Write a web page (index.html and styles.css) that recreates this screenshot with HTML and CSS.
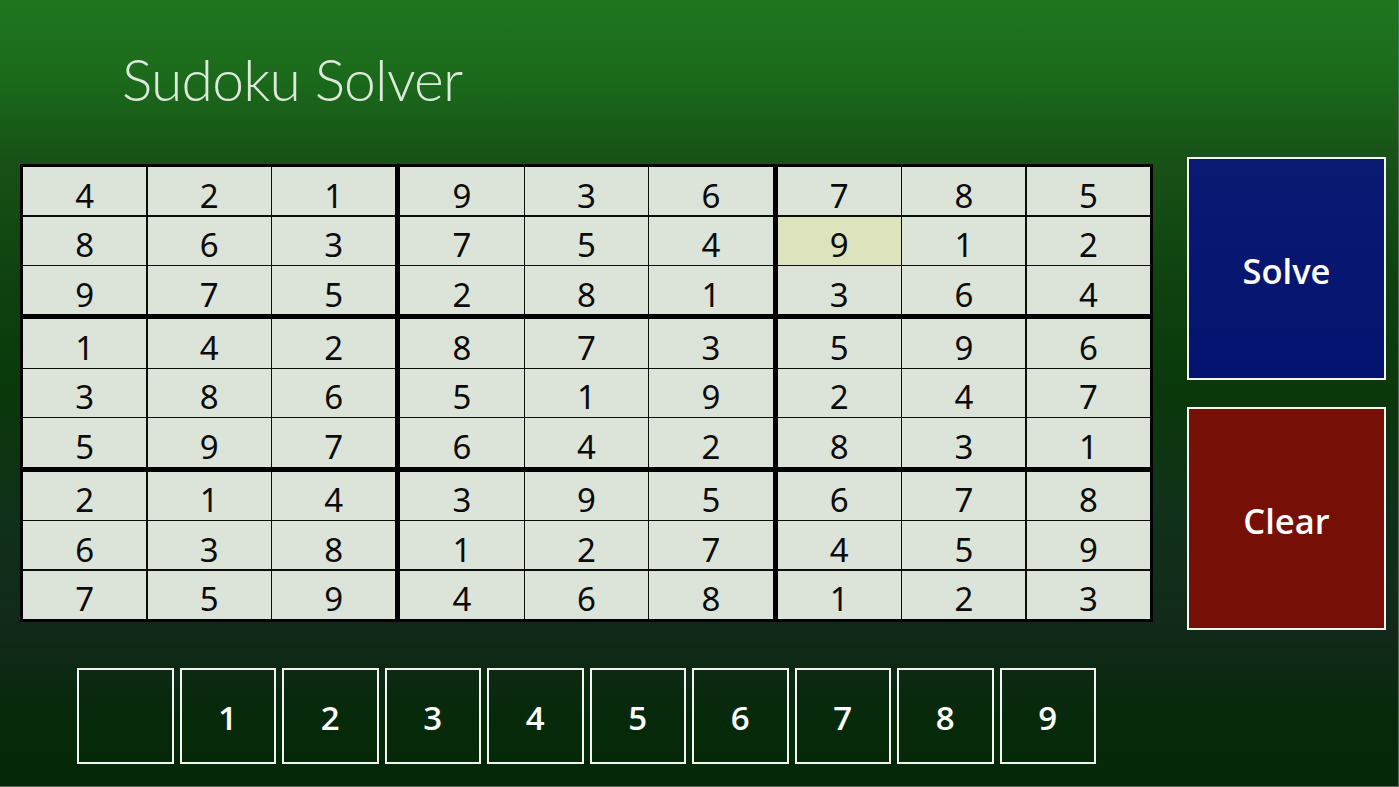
FILE: index.html
```html
<!DOCTYPE html>
<html lang="en">
<head>
<meta charset="utf-8">
<title>Sudoku Solver</title>
<link rel="stylesheet" href="styles.css">
</head>
<body>
<div class="app">
  <h1 class="title">Sudoku Solver</h1>
  <div class="main">
    <div class="board">
      <div class="block"><div class="cell">4</div><div class="cell">2</div><div class="cell">1</div><div class="cell">8</div><div class="cell">6</div><div class="cell">3</div><div class="cell">9</div><div class="cell">7</div><div class="cell">5</div></div>
      <div class="block"><div class="cell">9</div><div class="cell">3</div><div class="cell">6</div><div class="cell">7</div><div class="cell">5</div><div class="cell">4</div><div class="cell">2</div><div class="cell">8</div><div class="cell">1</div></div>
      <div class="block"><div class="cell">7</div><div class="cell">8</div><div class="cell">5</div><div class="cell selected">9</div><div class="cell">1</div><div class="cell">2</div><div class="cell">3</div><div class="cell">6</div><div class="cell">4</div></div>
      <div class="block"><div class="cell">1</div><div class="cell">4</div><div class="cell">2</div><div class="cell">3</div><div class="cell">8</div><div class="cell">6</div><div class="cell">5</div><div class="cell">9</div><div class="cell">7</div></div>
      <div class="block"><div class="cell">8</div><div class="cell">7</div><div class="cell">3</div><div class="cell">5</div><div class="cell">1</div><div class="cell">9</div><div class="cell">6</div><div class="cell">4</div><div class="cell">2</div></div>
      <div class="block"><div class="cell">5</div><div class="cell">9</div><div class="cell">6</div><div class="cell">2</div><div class="cell">4</div><div class="cell">7</div><div class="cell">8</div><div class="cell">3</div><div class="cell">1</div></div>
      <div class="block"><div class="cell">2</div><div class="cell">1</div><div class="cell">4</div><div class="cell">6</div><div class="cell">3</div><div class="cell">8</div><div class="cell">7</div><div class="cell">5</div><div class="cell">9</div></div>
      <div class="block"><div class="cell">3</div><div class="cell">9</div><div class="cell">5</div><div class="cell">1</div><div class="cell">2</div><div class="cell">7</div><div class="cell">4</div><div class="cell">6</div><div class="cell">8</div></div>
      <div class="block"><div class="cell">6</div><div class="cell">7</div><div class="cell">8</div><div class="cell">4</div><div class="cell">5</div><div class="cell">9</div><div class="cell">1</div><div class="cell">2</div><div class="cell">3</div></div>
    </div>
    <div class="actions">
      <button class="action solve">Solve</button>
      <button class="action clear">Clear</button>
    </div>
  </div>
  <div class="pad">
    <button class="key"></button>
    <button class="key">1</button>
    <button class="key">2</button>
    <button class="key">3</button>
    <button class="key">4</button>
    <button class="key">5</button>
    <button class="key">6</button>
    <button class="key">7</button>
    <button class="key">8</button>
    <button class="key">9</button>
  </div>
</div>
</body>
</html>
```

FILE: styles.css
```css
html, body {
  margin: 0;
  padding: 0;
}

body {
  width: 1399px;
  height: 787px;
  overflow: hidden;
  font-family: "Noto Sans", "Open Sans", "DejaVu Sans", sans-serif;
}

.app {
  box-sizing: border-box;
  width: 1399px;
  height: 787px;
  display: flex;
  flex-direction: column;
  background: linear-gradient(to bottom,
    #1f761f 0%,
    #1b6a1b 10%,
    #185218 20%,
    #0f420f 35%,
    #0a380b 50%,
    #10311a 65%,
    #12291a 80%,
    #06290a 92%,
    #042808 100%);
  border-right: 1px solid #5c6c5c;
  border-bottom: 1px solid #5c6c5c;
}

.title {
  margin: 0;
  padding: 51px 0 0 122px;
  height: 107px;
  box-sizing: border-box;
  font-family: "Lato", "Open Sans", sans-serif;
  font-weight: 300;
  font-size: 57px;
  line-height: 1;
  color: #dde9dd;
  letter-spacing: -0.8px;
}

.main {
  display: flex;
  align-items: flex-start;
  gap: 34px;
  padding-left: 20px;
  margin-top: 50px;
}

.board {
  margin-top: 7px;
  width: 1133px;
  height: 458px;
  box-sizing: border-box;
  border: 3px solid #000;
  background: #000;
  display: grid;
  grid-template-columns: repeat(3, 1fr);
  grid-template-rows: repeat(3, 1fr);
  gap: 5px;
}

.block {
  display: grid;
  grid-template-columns: repeat(3, 1fr);
  grid-template-rows: repeat(3, 1fr);
  gap: 1.4px;
  background: #0a0d0a;
}

.cell {
  background: #dce3d8;
  color: #0b0b0b;
  font-size: 33px;
  display: flex;
  align-items: center;
  justify-content: center;
  padding-top: 8px;
  box-sizing: border-box;
  line-height: 1;
}

.cell.selected {
  background: #dce3bd;
}

.actions {
  display: flex;
  flex-direction: column;
  gap: 27px;
}

.action {
  width: 199px;
  height: 223px;
  box-sizing: border-box;
  border: 2px solid #f4f4f4;
  color: #fff;
  font-family: "Open Sans", "Noto Sans", sans-serif;
  font-weight: 600;
  font-size: 34.5px;
  padding: 4px 0 0;
  margin: 0;
}

.solve {
  background: linear-gradient(to bottom, #0a1a73, #04136f);
}

.clear {
  background: #760f06;
}

.pad {
  display: flex;
  gap: 6px;
  padding-left: 77px;
  margin-top: 38px;
}

.key {
  width: 96.5px;
  height: 96px;
  box-sizing: border-box;
  border: 2px solid #f2f4f2;
  background: transparent;
  color: #fff;
  font-family: "Open Sans", "Noto Sans", sans-serif;
  font-weight: 600;
  font-size: 33px;
  padding: 2px 0 0;
  margin: 0;
}
```
